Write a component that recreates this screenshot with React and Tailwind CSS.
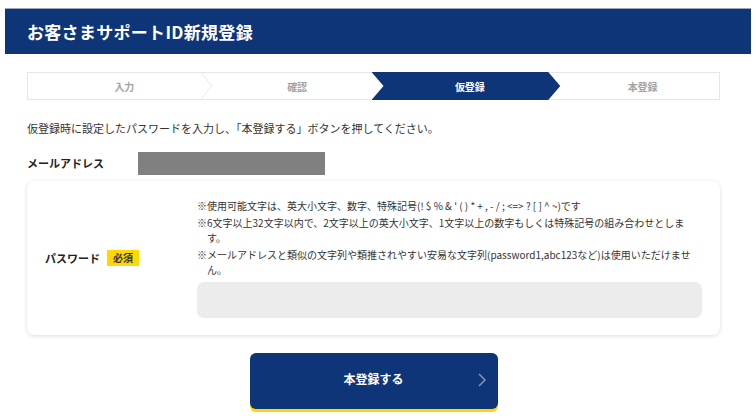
import React from 'react';

const steps = ['入力', '確認', '仮登録', '本登録'];

function StepBar({ current }) {
  return (
    <div className="flex h-[28px] border border-[#e6e6e6] bg-white">
      {steps.map((label, i) => {
        const active = i === current;
        const last = i === steps.length - 1;
        return (
          <div key={label} className="relative flex-1">
            {active ? (
              <div className="absolute -top-px -bottom-px -left-[2px] -right-[14px] z-10 flex items-center justify-center bg-[#0f3579] pl-[8px] text-white [clip-path:polygon(0_0,calc(100%-12px)_0,100%_50%,calc(100%-12px)_100%,0_100%,12px_50%)]">
                <span className="text-[10px] font-bold">{label}</span>
              </div>
            ) : (
              <div className="flex h-full items-center justify-center pl-[20px] text-[10px] font-bold text-[#a3a3a3]">
                {label}
              </div>
            )}
            {!active && !last && i !== current - 1 && (
              <svg className="absolute right-[-12px] top-0 h-full w-[12px]" viewBox="0 0 12 28" preserveAspectRatio="none">
                <path d="M0 0 L11 14 L0 28" fill="none" stroke="#e6e6e6" strokeWidth="1" />
              </svg>
            )}
          </div>
        );
      })}
    </div>
  );
}

export default function App() {
  return (
    <div className="min-h-[419px] w-[756px] bg-white font-['Noto_Sans_CJK_JP','Noto_Sans',sans-serif] text-[#333]">
      <div className="mx-[5px] pt-[8px]">
        <div className="flex h-[46px] items-center border-t border-[#9aa8c2] bg-[#0f3579] pl-[22px]">
          <h1 className="text-[17px] font-bold tracking-[0.3px] text-white">お客さまサポートID新規登録</h1>
        </div>
      </div>

      <div className="ml-[27px] w-[693px]">
        <div className="mt-[18px]">
          <StepBar current={2} />
        </div>

        <p className="mt-[20px] text-[11px] leading-[16px] text-[#333]">
          仮登録時に設定したパスワードを入力し、「本登録する」ボタンを押してください。
        </p>

        <div className="mt-[16px] flex items-center">
          <div className="w-[111px] text-[11px] font-bold text-[#222]">メールアドレス</div>
          <div className="h-[23px] w-[187px] bg-[#808080]" />
        </div>

        <div className="mt-[6px] flex items-center rounded-[8px] bg-white px-[18px] py-[17px] shadow-[0_1px_4px_rgba(0,0,0,0.14)]">
          <div className="flex w-[152px] items-center gap-[7px]">
            <span className="text-[11px] font-bold text-[#222]">パスワード</span>
            <span className="bg-[#ffd800] px-[6px] py-[1px] text-[10px] font-bold leading-[14px] text-[#333]">必須</span>
          </div>
          <div className="flex-1">
            <ul className="w-[500px] space-y-[1px] text-[10px] leading-[15.5px] text-[#333]">
              <li className="pl-[10px] -indent-[10px]">※使用可能文字は、英大小文字、数字、特殊記号(! $ % &amp; ' ( ) * + , - / ; &lt;=&gt; ? [ ] ^ { } ~)です</li>
              <li className="pl-[10px] -indent-[10px]">※6文字以上32文字以内で、2文字以上の英大小文字、1文字以上の数字もしくは特殊記号の組み合わせとします。</li>
              <li className="pl-[10px] -indent-[10px]">※メールアドレスと類似の文字列や類推されやすい安易な文字列(password1,abc123など)は使用いただけません。</li>
            </ul>
            <input type="password" className="mt-[4px] block h-[36px] w-full rounded-[7px] bg-[#ececec] px-3 outline-none" />
          </div>
        </div>

        <div className="mt-[18px] flex justify-center">
          <button className="relative flex h-[56px] w-[248px] items-center justify-center rounded-[6px] bg-[#0f3579] pb-[3px] text-[12px] font-bold text-white shadow-[0_3px_0_#ffd800]">
            本登録する
            <svg className="absolute right-[12px] top-1/2 -mt-[8px] h-[14px] w-[8px]" viewBox="0 0 8 14">
              <path d="M1 1 L7 7 L1 13" fill="none" stroke="#8c9cc0" strokeWidth="1.4" />
            </svg>
          </button>
        </div>
      </div>
    </div>
  );
}
